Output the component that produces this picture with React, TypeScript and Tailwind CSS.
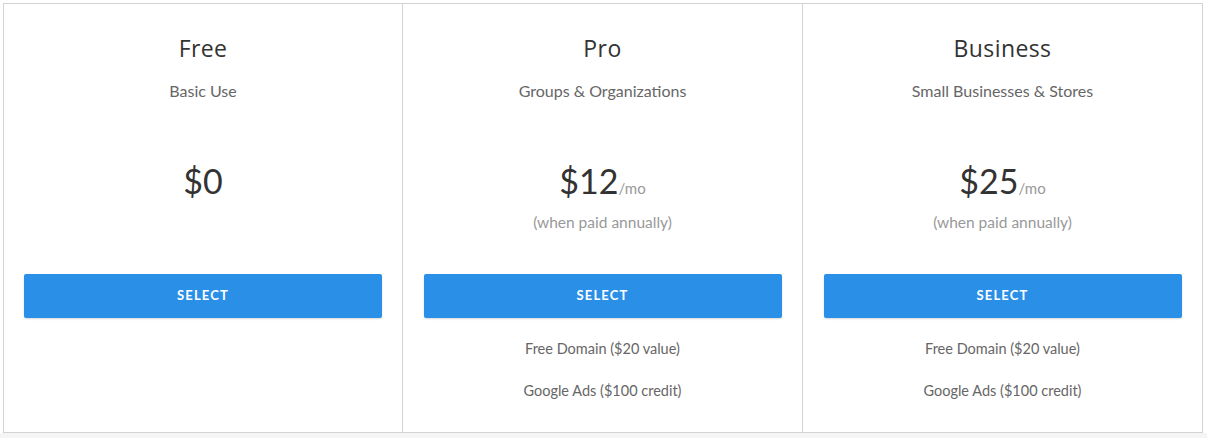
const plans = [
  { name: 'Free', tag: 'Basic Use', price: '$0', per: false, features: [] as string[] },
  {
    name: 'Pro',
    tag: 'Groups & Organizations',
    price: '$12',
    per: true,
    features: ['Free Domain ($20 value)', 'Google Ads ($100 credit)'],
  },
  {
    name: 'Business',
    tag: 'Small Businesses & Stores',
    price: '$25',
    per: true,
    features: ['Free Domain ($20 value)', 'Google Ads ($100 credit)'],
  },
];

export default function App() {
  return (
    <div className="min-h-screen bg-white font-['Lato','Liberation_Sans',sans-serif]">
      <div className="pl-[3px] pt-[3px]">
        <div className="w-[1200px] h-[430px] border border-[#d3d3d3] grid grid-cols-[398px_400px_400px]">
          {plans.map((p, i) => (
            <div
              key={p.name}
              className={`flex flex-col items-center px-5 pt-[30px] ${i > 0 ? 'border-l border-[#d3d3d3]' : ''}`}
            >
              <h2 className="font-['Open_Sans','Liberation_Sans',sans-serif] text-[23px] tracking-[0.4px] leading-[28px] text-[#333]">
                {p.name}
              </h2>
              <p className="mt-[19px] text-[16px] leading-5 text-[#666]">{p.tag}</p>

              <div className="mt-[58px] h-[115px] flex flex-col items-center">
                <div className="h-[44px] flex items-baseline leading-[44px]">
                  <span className="text-[34px] text-[#333]">{p.price}</span>
                  {p.per && <span className="text-[15px] leading-none text-[#999]">/mo</span>}
                </div>
                {p.per && (
                  <p className="mt-[9px] text-[15.5px] leading-5 text-[#999]">(when paid annually)</p>
                )}
              </div>

              <button className="w-[358px] h-[44px] rounded-[2px] bg-[#2a8fe7] text-white text-[13px] font-bold tracking-[1.2px] shadow-[0_1px_2px_rgba(0,0,0,0.15)]">
                SELECT
              </button>

              <ul className="mt-[21px] flex flex-col gap-[22px]">
                {p.features.map((f) => (
                  <li key={f} className="text-[14.5px] leading-5 text-[#666] text-center">
                    {f}
                  </li>
                ))}
              </ul>
            </div>
          ))}
        </div>
      </div>
      <div className="h-[6px] bg-[#f5f5f5]" />
    </div>
  );
}
